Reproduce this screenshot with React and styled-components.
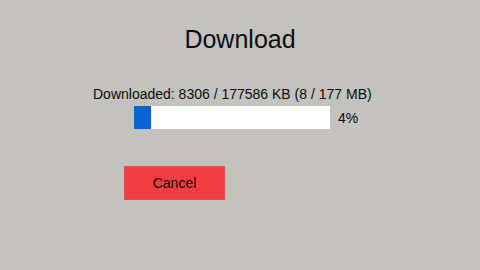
import React from "react";
import styled, { createGlobalStyle } from "styled-components";

const GlobalStyle = createGlobalStyle`
  html, body {
    margin: 0;
    padding: 0;
    background: #c4c2bf;
  }
  body {
    font-family: "Liberation Sans", Arial, sans-serif;
    color: #0d0d0d;
  }
`;

const Page = styled.div`
  width: 480px;
  height: 270px;
  display: flex;
  flex-direction: column;
  align-items: center;
  box-sizing: border-box;
  padding-top: 25px;
`;

const Title = styled.h1`
  margin: 0;
  font-size: 25px;
  line-height: 29px;
  font-weight: 400;
`;

const Panel = styled.div`
  margin-top: 32px;
  width: 280px;
  margin-left: -14px;
  display: flex;
  flex-direction: column;
`;

const Status = styled.div`
  font-size: 14px;
  line-height: 16px;
  white-space: nowrap;
`;

const BarRow = styled.div`
  margin-top: 4px;
  margin-left: 41px;
  display: flex;
  align-items: center;
  gap: 8px;
`;

const Track = styled.div`
  width: 196px;
  height: 23px;
  background: #fff;
  display: flex;
`;

const Fill = styled.div`
  height: 100%;
  background: #0a64d2;
`;

const Percent = styled.span`
  font-size: 14px;
  line-height: 16px;
`;

const CancelButton = styled.button`
  margin-top: 37px;
  margin-left: 31px;
  width: 101px;
  height: 34px;
  background: #f03e42;
  border: 1px solid #e0504f;
  color: #1a0a0a;
  font-family: "Liberation Sans", Arial, sans-serif;
  font-size: 14px;
  padding: 0;
  cursor: pointer;
`;

export default function App() {
  return (
    <>
      <GlobalStyle />
      <Page>
        <Title>Download</Title>
        <Panel>
          <Status>Downloaded: 8306 / 177586 KB (8 / 177 MB)</Status>
          <BarRow>
            <Track>
              <Fill style={{ width: 17 }} />
            </Track>
            <Percent>4%</Percent>
          </BarRow>
          <div>
            <CancelButton>Cancel</CancelButton>
          </div>
        </Panel>
      </Page>
    </>
  );
}
